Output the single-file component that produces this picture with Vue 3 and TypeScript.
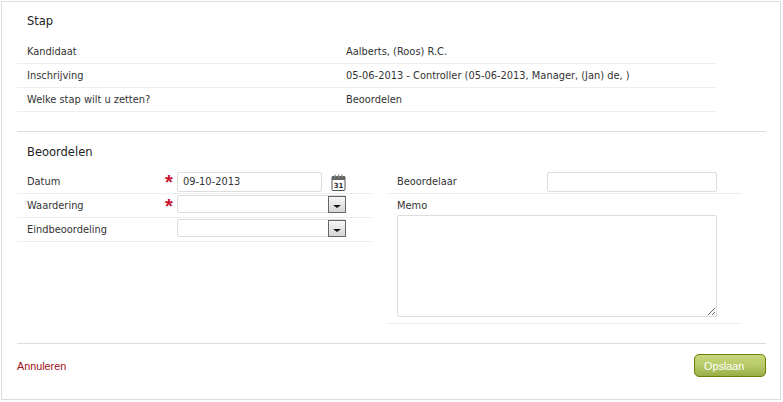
<script setup lang="ts">
const summary = [
  { label: 'Kandidaat', value: 'Aalberts, (Roos) R.C.' },
  { label: 'Inschrijving', value: '05-06-2013 - Controller (05-06-2013, Manager, (Jan) de, )' },
  { label: 'Welke stap wilt u zetten?', value: 'Beoordelen' },
]
</script>

<template>
  <div class="panel">
    <section class="stap">
      <h2 class="title">Stap</h2>
      <div v-for="row in summary" :key="row.label" class="summary-row">
        <span class="summary-label">{{ row.label }}</span>
        <span>{{ row.value }}</span>
      </div>
    </section>

    <section class="beoordelen">
      <h2 class="title">Beoordelen</h2>
      <div class="columns">
        <div class="col">
          <div class="form-row">
            <label class="form-label">Datum</label>
            <span class="star">*</span>
            <input class="text date" type="text" value="09-10-2013" />
            <svg class="cal" width="15" height="17" viewBox="0 0 15 17" aria-hidden="true">
              <rect x="1" y="2.5" width="13" height="14" rx="1" fill="#fff" stroke="#555" />
              <rect x="1" y="2" width="13" height="4" fill="#666" />
              <path d="M4 0.5v3M7.5 0.5v3M11 0.5v3" stroke="#888" stroke-width="1.2" />
              <text x="7.6" y="14.2" class="cal-text" text-anchor="middle">31</text>
            </svg>
          </div>
          <div class="form-row">
            <label class="form-label">Waardering</label>
            <span class="star">*</span>
            <span class="select-wrap"><select class="select"><option></option></select></span>
          </div>
          <div class="form-row">
            <label class="form-label">Eindbeoordeling</label>
            <span class="star"></span>
            <span class="select-wrap"><select class="select"><option></option></select></span>
          </div>
        </div>

        <div class="col">
          <div class="form-row">
            <label class="form-label wide">Beoordelaar</label>
            <input class="text assessor" type="text" />
          </div>
          <div class="memo-row">
            <label class="memo-label">Memo</label>
            <textarea class="memo"></textarea>
          </div>
        </div>
      </div>
    </section>

    <footer class="footer">
      <a class="cancel" href="#">Annuleren</a>
      <button class="save" type="button">Opslaan</button>
    </footer>
  </div>
</template>

<style>
html, body { margin: 0; background: #fff; }
</style>

<style scoped>
.panel {
  box-sizing: border-box;
  width: 780px;
  height: 399px;
  margin: 1px 0 0 1px;
  padding: 0 14px 0 15px;
  border: 1px solid #ddd;
  background: #fff;
  font: 9.85px/14px "DejaVu Sans", sans-serif;
  color: #333;
}
.title {
  margin: 0;
  padding-left: 10px;
  font-weight: normal;
  font-size: 11.5px;
  line-height: 16px;
  color: #222;
}
.stap {
  height: 130px;
  padding-top: 11px;
  box-sizing: border-box;
  border-bottom: 1px solid #ddd;
}
.stap .title { margin-bottom: 11px; }
.summary-row {
  display: flex;
  align-items: center;
  box-sizing: border-box;
  width: 700px;
  height: 24px;
  padding-left: 10px;
  border-bottom: 1px solid #eee;
}
.summary-label { width: 319px; }
.beoordelen { height: 212px; padding-top: 12px; box-sizing: border-box; border-bottom: 1px solid #ddd; }
.columns { display: flex; gap: 15px; margin-top: 10px; }
.col { width: 355px; }
.form-row {
  display: flex;
  align-items: center;
  box-sizing: border-box;
  height: 24px;
  padding-left: 10px;
  border-bottom: 1px solid #eee;
}
.form-label { width: 138px; }
.form-label.wide { width: 150px; }
.star {
  width: 12px;
  color: #c8102e;
  font: bold 20px/20px "Liberation Sans", sans-serif;
  height: 20px;
}
.text {
  box-sizing: border-box;
  height: 20px;
  margin: 0;
  padding: 0 5px;
  border: 1px solid #ddd;
  border-radius: 2px;
  background: #fff;
  font: inherit;
  color: #333;
  outline: none;
}
.date { width: 145px; }
.assessor { width: 170px; }
.cal { margin: 2px 0 0 9px; }
.cal-text { font: bold 7px "DejaVu Sans", sans-serif; fill: #333; }
.select-wrap { position: relative; display: block; width: 169px; height: 18px; margin-bottom: 3px; }
.select-wrap::after {
  content: "";
  position: absolute;
  top: 1px;
  right: 0;
  box-sizing: border-box;
  width: 18px;
  height: 17px;
  border: 1px solid #666;
  background: linear-gradient(#f6f6f6, #d6d6d6);
  pointer-events: none;
}
.select-wrap::before {
  content: "";
  position: absolute;
  z-index: 1;
  top: 10px;
  right: 5px;
  border: 4px solid transparent;
  border-top: 3px solid #111;
  border-bottom: 0;
  pointer-events: none;
}
.select {
  appearance: none;
  display: block;
  box-sizing: border-box;
  width: 100%;
  height: 18px;
  border: 1px solid #ddd;
  border-radius: 2px;
  background: #fff;
  font: inherit;
}
.memo-row {
  box-sizing: border-box;
  height: 130px;
  padding: 5px 0 0 10px;
  border-bottom: 1px solid #eee;
}
.memo-label { display: block; height: 16px; }
.memo {
  display: block;
  box-sizing: border-box;
  width: 320px;
  height: 102px;
  margin: 0;
  border: 1px solid #ddd;
  border-radius: 2px;
  outline: none;
}
.footer {
  display: flex;
  align-items: center;
  justify-content: space-between;
  padding-top: 10px;
}
.cancel {
  font: 10.8px/14px "Liberation Sans", sans-serif;
  color: #a01020;
  text-decoration: none;
  padding-top: 1px;
}
.save {
  box-sizing: border-box;
  width: 72px;
  height: 23px;
  padding: 0 0 0 9px;
  border: 1px solid #6f8000;
  border-radius: 5px;
  background: linear-gradient(#c6d67c, #b8ca68 50%, #98ad48);
  color: #fff;
  font: 10.8px/14px "Liberation Sans", sans-serif;
  text-align: left;
}
</style>
